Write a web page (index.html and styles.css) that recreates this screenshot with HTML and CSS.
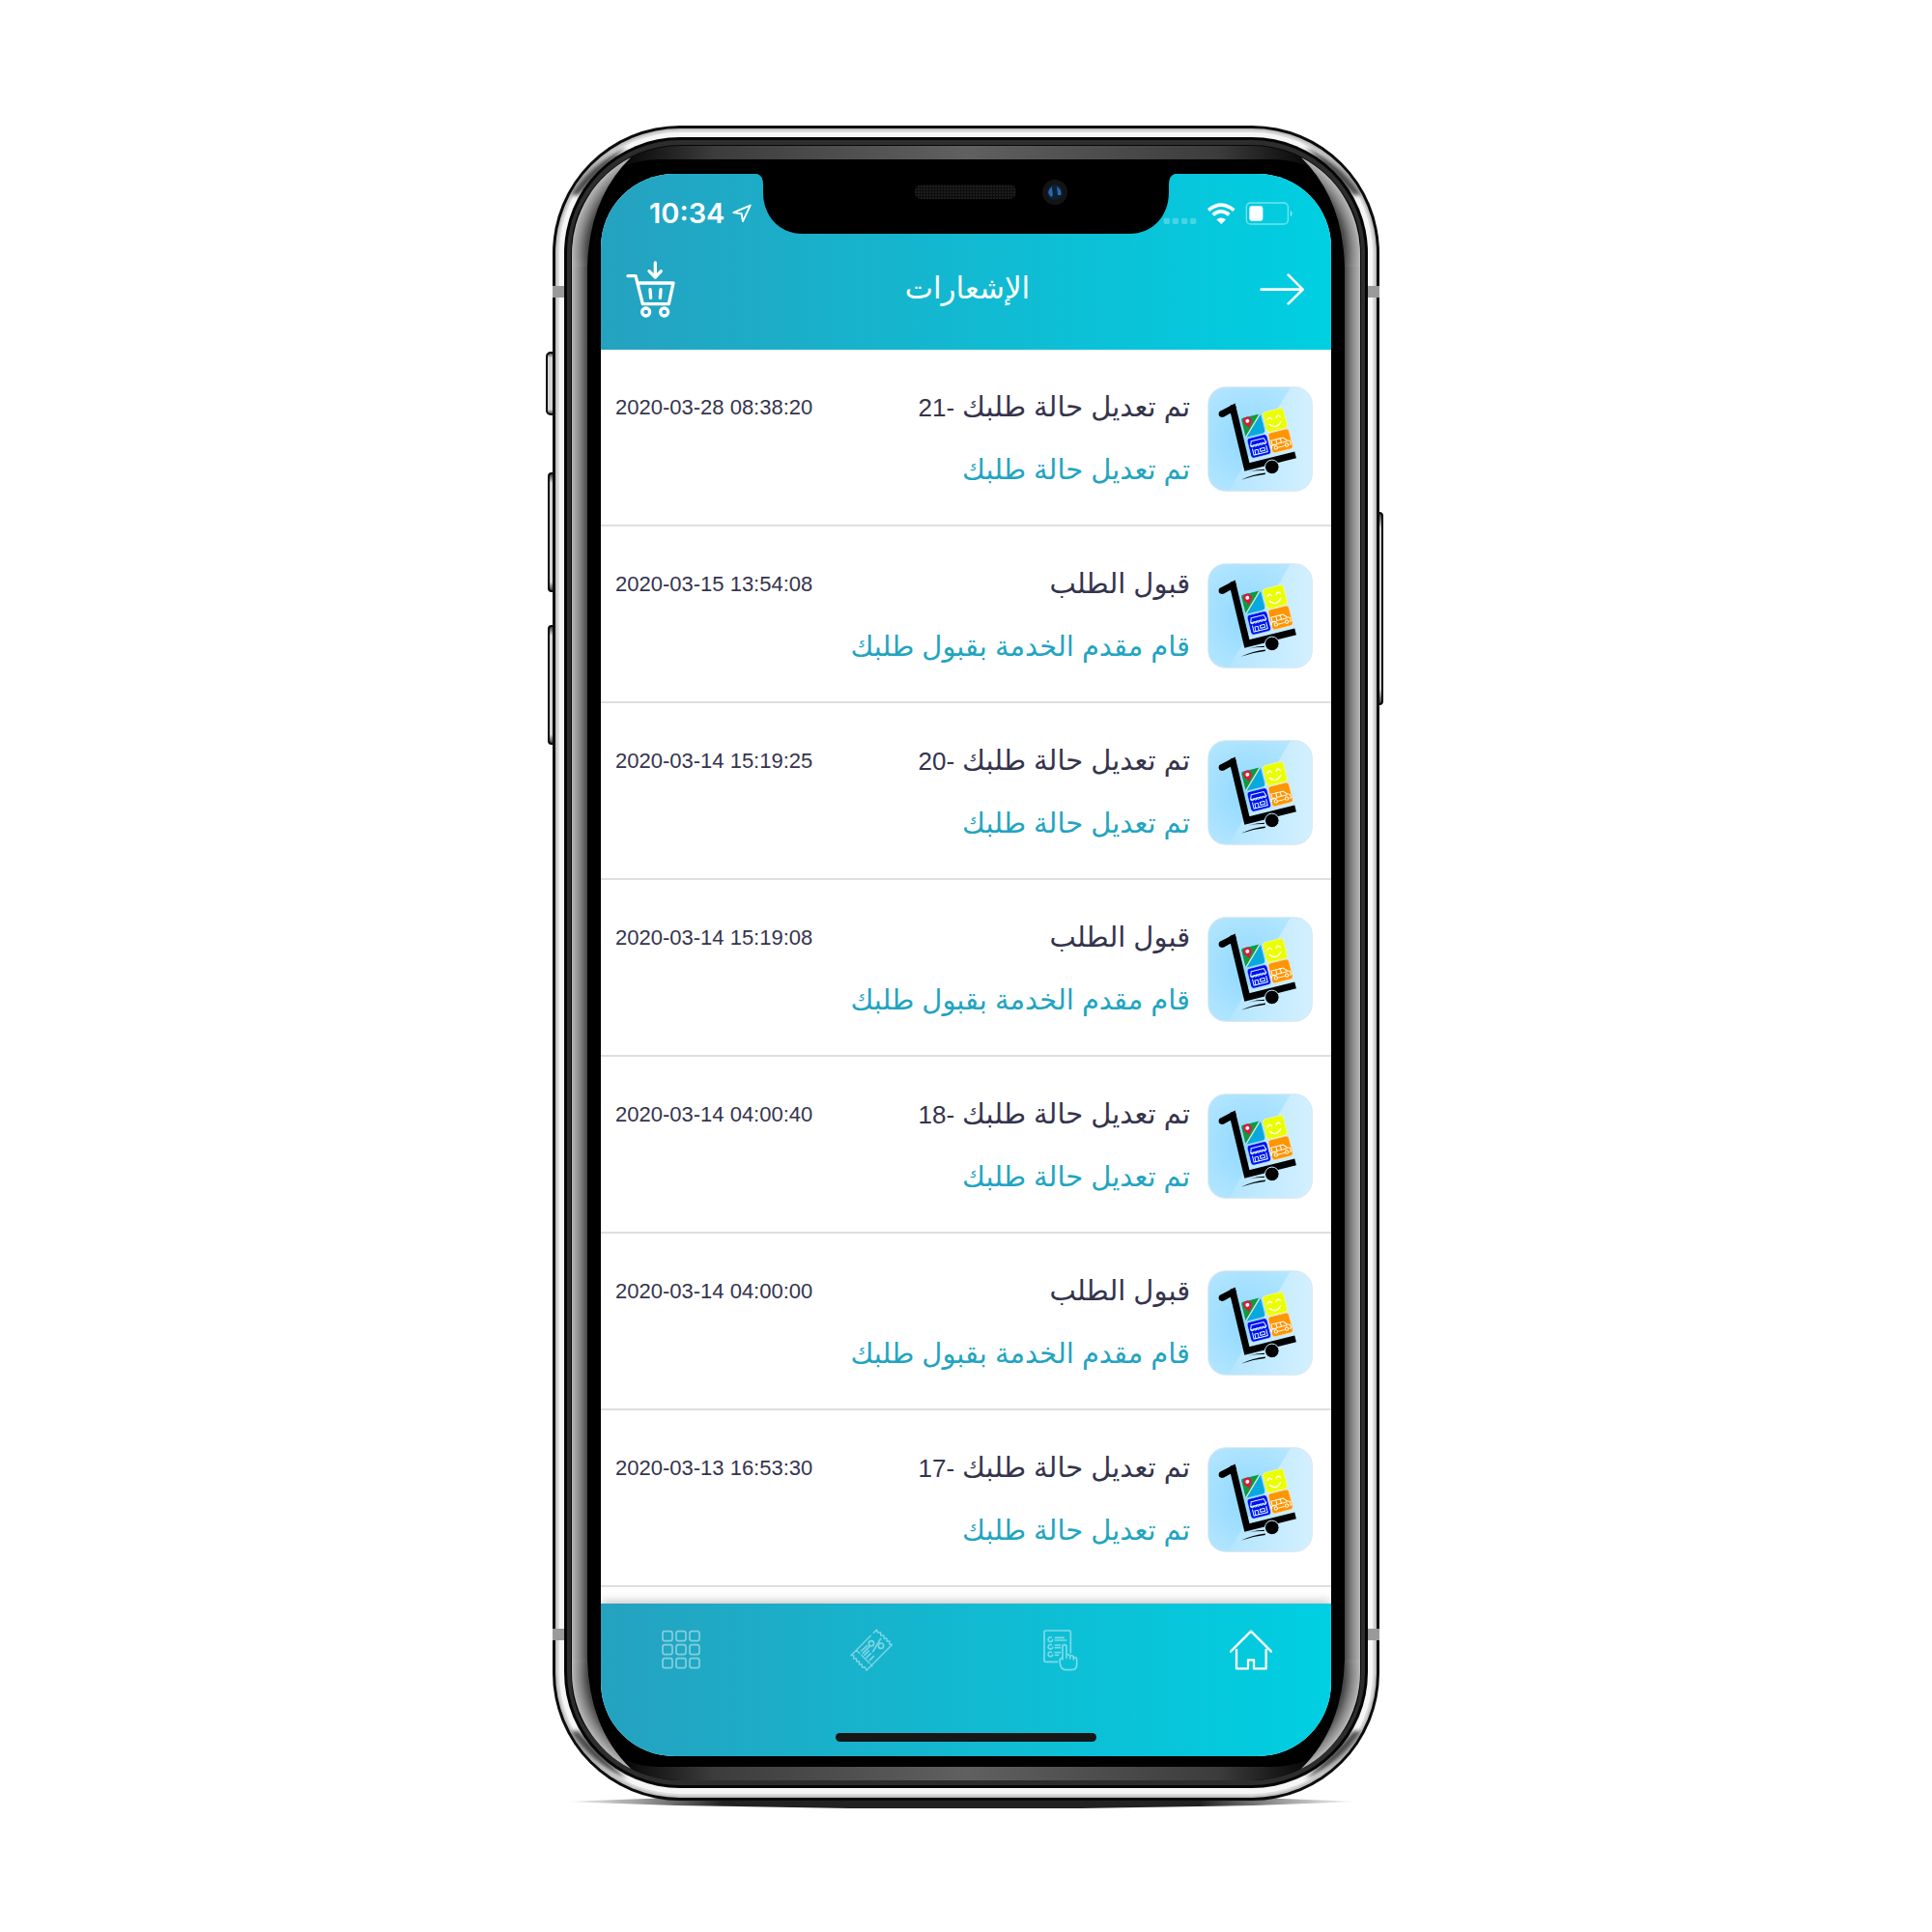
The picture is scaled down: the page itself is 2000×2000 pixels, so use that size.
FILE: index.html
```html
<!DOCTYPE html>
<html lang="ar" dir="rtl">
<head>
<meta charset="utf-8">
<meta name="viewport" content="width=device-width, initial-scale=1">
<title>الإشعارات</title>
<link rel="stylesheet" href="styles.css">
</head>
<body>
<svg width="0" height="0" class="defs" aria-hidden="true">
  <defs>
    <radialGradient id="sky" cx=".4" cy=".5" r=".6"><stop offset="0" stop-color="#8fd8ff"/><stop offset="1" stop-color="#b4e6ff"/></radialGradient>
    <linearGradient id="beam" x1="0" y1="0" x2="1" y2="0"><stop offset="0" stop-color="#b3e5ff"/><stop offset="1" stop-color="#d3f0ff"/></linearGradient>
    <clipPath id="tile"><rect x="96" y="89" width="324" height="324" rx="54"/></clipPath>
  </defs>
  <symbol id="app-logo" viewBox="94 87 328 328">
    <g clip-path="url(#tile)">
      <path fill="url(#sky)" d="M94 87h328v328H94z"/>
      <path fill="url(#beam)" d="M354 87h68v328H158z"/>
    </g>
    <rect x="96" y="89" width="324" height="324" rx="54" fill="none" stroke="#dfe6ee" stroke-width="3"/>
    <path d="M139 173 173 155 217 338 368 300" fill="none" stroke="#000" stroke-width="21"/>
    <circle cx="139" cy="173" r="10"/><circle cx="173" cy="154" r="10"/>
    <g transform="rotate(-14 200 187)">
      <rect x="199" y="187" width="62" height="60" rx="6" fill="#08a9df"/>
      <path d="M205 187h52l-58 58v-52q0-6 6-6z" fill="#109a3c"/>
      <path d="M258 188 200 246" stroke="#e8e8c8" stroke-width="4"/>
      <path d="M216 223c-2-10-13-14-13-24a13 13 0 0 1 26 0c0 10-11 14-13 24z" fill="#e3133f"/>
      <circle cx="216" cy="199" r="6" fill="#fff"/>
      <rect x="267" y="185" width="66" height="64" rx="10" fill="#eaff00" stroke="#fff6a0" stroke-width="2"/>
      <path d="M277 211q6-11 14 0M305 211q6-11 14 0M280 226q18 22 36 0" fill="none" stroke="#fff" stroke-width="4" stroke-linecap="round"/>
      <g transform="translate(1 -3)">
        <rect x="199" y="255" width="64" height="64" rx="10" fill="#0010f0" stroke="#bfe6ff" stroke-width="2"/>
        <path d="M211 266h40l5 14h-50zM206 280q5 9 10 0q5 9 10 0q5 9 10 0q5 9 10 0q5 9 10 0M209 290v20h44v-20M215 310v-14h10v14M232 295h14v9h-14z" fill="none" stroke="#dff" stroke-width="3"/>
        <rect x="267" y="255" width="66" height="64" rx="10" fill="#ff9500" stroke="#ffe2b0" stroke-width="2"/>
        <path d="M268 303v-8h18l-14-2v-14h38l10 11 9 4v11h-6M310 305h-22M287 279v14h33M301 279v14" fill="none" stroke="#fff" stroke-width="3"/>
        <circle cx="281" cy="304" r="5" fill="none" stroke="#fff" stroke-width="3"/><circle cx="316" cy="304" r="5" fill="none" stroke="#fff" stroke-width="3"/>
      </g>
    </g>
    <circle cx="295" cy="338" r="22" stroke="#cdeeff" stroke-width="3"/>
    <path d="M198 378q38-18 76-22v5q-38 4-76 17zM222 353q25-8 49-8v4q-24-1-49 4z"/>
  </symbol>
</svg>

<main class="phone">
  <svg class="phone-frame" viewBox="573 130 856 1734" preserveAspectRatio="none" aria-hidden="true">
    <defs>
      <linearGradient id="edgeL" gradientUnits="userSpaceOnUse" x1="593" x2="609" y1="0" y2="0"><stop offset="0" stop-color="#b8b8b8"/><stop offset=".5" stop-color="#888"/><stop offset="1" stop-color="#484848"/></linearGradient>
      <linearGradient id="edgeR" gradientUnits="userSpaceOnUse" x1="1409" x2="1393" y1="0" y2="0"><stop offset="0" stop-color="#b8b8b8"/><stop offset=".5" stop-color="#888"/><stop offset="1" stop-color="#484848"/></linearGradient>
      <radialGradient id="bend" gradientUnits="userSpaceOnUse" cx="705" cy="263" r="112"><stop offset=".857" stop-color="#484848"/><stop offset=".93" stop-color="#888"/><stop offset="1" stop-color="#b8b8b8"/></radialGradient>
      <linearGradient id="edgeTop" x1="0" x2="1" y1="0" y2="0"><stop offset=".05" stop-color="#000"/><stop offset=".18" stop-color="#3c3c3c"/><stop offset=".5" stop-color="#606060"/><stop offset=".82" stop-color="#3c3c3c"/><stop offset=".95" stop-color="#000"/></linearGradient>
      <linearGradient id="ground" x1="0" x2="1" y1="0" y2="0"><stop offset="0" stop-color="#fff"/><stop offset=".1" stop-color="#999"/><stop offset=".2" stop-color="#222"/><stop offset=".8" stop-color="#222"/><stop offset=".9" stop-color="#999"/><stop offset="1" stop-color="#fff"/></linearGradient>
      <linearGradient id="key" x1="0" x2="0" y1="0" y2="1"><stop offset="0" stop-color="#333"/><stop offset=".08" stop-color="#d4d4d4"/><stop offset=".92" stop-color="#d4d4d4"/><stop offset="1" stop-color="#333"/></linearGradient>
      <filter id="soft" x="-30%" y="-30%" width="160%" height="160%"><feGaussianBlur stdDeviation="2"/></filter>
      <clipPath id="body"><rect x="576" y="133" width="850" height="1728" rx="129"/></clipPath>
      <path id="corner" d="M593 276V263A112 112 0 0 1 654 163Q611 205 609 276z" fill="url(#bend)"/>
    </defs>
    <path d="M584 1865 700 1861H1300L1408 1865 1300 1869 1120 1872H880L700 1869z" fill="url(#ground)"/>
    <g fill="url(#key)" stroke="#0a0a0a" stroke-width="2">
      <rect x="567" y="365" width="10" height="64" rx="4"/>
      <rect x="569" y="490" width="8" height="122" rx="3"/>
      <rect x="569" y="648" width="8" height="122" rx="3"/>
      <rect x="1425" y="531" width="7" height="198" rx="3"/>
    </g>
    <rect x="573" y="130" width="856" height="1734" rx="132" fill="#0c0c0c"/>
    <rect x="576" y="133" width="850" height="1728" rx="129" fill="#c2c2c2"/>
    <rect x="578" y="135" width="846" height="1724" rx="127" fill="#dcdcdc"/>
    <rect x="580" y="137" width="842" height="1720" rx="125" fill="#f6f6f6"/>
    <g fill="#4a4a4a" clip-path="url(#body)" filter="url(#soft)">
      <path d="M592 202q18-32 58-50-26 24-50 50zM1410 202q-18-32-58-50 26 24 50 50z"/>
      <path d="M592 1792q18 32 58 50-26-24-50-50zM1410 1792q-18 32-58 50 26-24 50-50z"/>
    </g>
    <g fill="#9a9a9a"><path d="M573 296h12v12h-12zM1417 296h12v12h-12zM573 1686h12v12h-12zM1417 1686h12v12h-12z"/></g>
    <rect x="585" y="142" width="832" height="1709" rx="120" fill="#050505"/>
    <rect x="588" y="145" width="826" height="1703" rx="117" fill="#2d2d2d"/>
    <rect x="592" y="150" width="818" height="1693" rx="113" fill="#080808"/>
    <rect x="593" y="151" width="816" height="1692" rx="112" fill="url(#edgeTop)"/>
    <rect x="593" y="165" width="816" height="1664" rx="90" fill="#000"/>
    <path d="M593 275h16v1444h-16z" fill="url(#edgeL)"/>
    <path d="M1393 275h16v1444h-16z" fill="url(#edgeR)"/>
    <use href="#corner"/>
    <use href="#corner" transform="translate(2002 0) scale(-1 1)"/>
    <use href="#corner" transform="translate(0 1994) scale(1 -1)"/>
    <use href="#corner" transform="translate(2002 1994) scale(-1 -1)"/>
  </svg>

  <div class="screen">
    <header class="top">
      <div class="status" dir="ltr">
        <span class="clock">10:34</span>
        <svg class="locate" viewBox="630 303 62 60" aria-hidden="true"><path d="M634 330 688 307 664 358 660 334z" fill="none" stroke="#fff" stroke-width="6" stroke-linejoin="round"/></svg>
        <svg class="signals" viewBox="616 296 402 72" aria-hidden="true">
          <g fill="#fff" opacity=".25"><rect x="618" y="346" width="19" height="19" rx="5"/><rect x="645" y="346" width="19" height="19" rx="5"/><rect x="673" y="346" width="19" height="19" rx="5"/><rect x="700" y="346" width="19" height="19" rx="5"/></g>
          <path d="M757 322q40-33 79 0M771 336q25-21 50 0" fill="none" stroke="#fff" stroke-width="11"/>
          <path d="M782 351q14-11 29 0l-14 14z" fill="#fff"/>
          <rect x="875" y="299" width="129" height="66" rx="13" fill="none" stroke="#fff" stroke-opacity=".45" stroke-width="4"/>
          <rect x="884" y="309" width="42" height="46" rx="7" fill="#fff"/>
          <path d="M1011 322q6 3 6 10t-6 10z" fill="#fff" opacity=".5"/>
        </svg>
      </div>
      <div class="toolbar">
        <button class="icon-button" type="button" aria-label="رجوع">
          <svg class="arrow" viewBox="915 518 138 99"><path d="M920 568h128M1004 523l45 45-45 44" fill="none" stroke="#fff" stroke-width="8" stroke-linecap="round" stroke-linejoin="round"/></svg>
        </button>
        <h1>الإشعارات</h1>
        <button class="icon-button" type="button" aria-label="السلة">
          <svg class="cart" viewBox="296 481 153 177"><g fill="none" stroke="#fff" stroke-width="10" stroke-linecap="round" stroke-linejoin="round"><path d="M302 528h24l22 87h81l14-65H334M371 570l2 26M404 570l-2 26M387 487v42M368 513l19 19 18-19"/><circle cx="358" cy="640" r="12"/><circle cx="415" cy="640" r="12"/></g></svg>
        </button>
      </div>
    </header>

    <ul class="list">
      <li class="item"><svg class="logo" aria-hidden="true"><use href="#app-logo"/></svg><div class="text"><h2>تم تعديل حالة طلبك <span class="num">-21</span></h2><p>تم تعديل حالة طلبك</p></div><time dir="ltr">2020-03-28 08:38:20</time></li>
      <li class="item"><svg class="logo" aria-hidden="true"><use href="#app-logo"/></svg><div class="text"><h2>قبول الطلب</h2><p>قام مقدم الخدمة بقبول طلبك</p></div><time dir="ltr">2020-03-15 13:54:08</time></li>
      <li class="item"><svg class="logo" aria-hidden="true"><use href="#app-logo"/></svg><div class="text"><h2>تم تعديل حالة طلبك <span class="num">-20</span></h2><p>تم تعديل حالة طلبك</p></div><time dir="ltr">2020-03-14 15:19:25</time></li>
      <li class="item"><svg class="logo" aria-hidden="true"><use href="#app-logo"/></svg><div class="text"><h2>قبول الطلب</h2><p>قام مقدم الخدمة بقبول طلبك</p></div><time dir="ltr">2020-03-14 15:19:08</time></li>
      <li class="item"><svg class="logo" aria-hidden="true"><use href="#app-logo"/></svg><div class="text"><h2>تم تعديل حالة طلبك <span class="num">-18</span></h2><p>تم تعديل حالة طلبك</p></div><time dir="ltr">2020-03-14 04:00:40</time></li>
      <li class="item"><svg class="logo" aria-hidden="true"><use href="#app-logo"/></svg><div class="text"><h2>قبول الطلب</h2><p>قام مقدم الخدمة بقبول طلبك</p></div><time dir="ltr">2020-03-14 04:00:00</time></li>
      <li class="item"><svg class="logo" aria-hidden="true"><use href="#app-logo"/></svg><div class="text"><h2>تم تعديل حالة طلبك <span class="num">-17</span></h2><p>تم تعديل حالة طلبك</p></div><time dir="ltr">2020-03-13 16:53:30</time></li>
    </ul>

    <nav class="tabs">
      <div class="tab-row">
        <a class="tab active" href="#home" aria-label="الرئيسية"><svg viewBox="821 200 132 132"><path d="M824 271l63-63 63 63M842 266v58h36v-27h18v27h38v-58" fill="none" stroke="#fff" stroke-width="7" stroke-linecap="round" stroke-linejoin="round"/></svg></a>
        <a class="tab" href="#orders" aria-label="الطلبات"><svg viewBox="234 200 132 132"><g fill="none" stroke="#fff" stroke-width="5" stroke-linecap="round" stroke-linejoin="round"><path d="M290 303h-36q-5 0-5-5v-87q0-5 5-5h72q5 0 5 5v64"/><path d="M271 227a7 7 0 1 0 4 8M271 250a7 7 0 1 0 4 8M271 273a7 7 0 1 0 4 8M283 228h27M283 236h35M283 251h16M283 259h16M283 274h16M283 282h10"/><path d="M306 296v-39q0-7 6-7t6 7v25q6-6 11 3q7-5 11 4q10-2 10 8v14q0 17-16 17h-17q-13 0-18-14l-2-14q0-8 9-11M318 282v9M329 285v8M340 289v7"/></g></svg></a>
        <a class="tab" href="#offers" aria-label="العروض"><svg viewBox="962 199 132 132"><g fill="none" stroke="#fff" stroke-width="4" stroke-linejoin="round" stroke-linecap="round"><path d="M1026 221l-61 61 9 1-1 9 9 0 0 9 9 0-1 9 9 0 0 9 10 0 4 10 80-81-9-1 1-9-9 0 0-9-9 0 0-9-10 0 0-9-9 0-3-9-10 10M982 266l10 10 M997 281l25 25M1026 310l5 5"/><path d="M997 268l18-16M1002 275l20-20M1007 281l13-13M1013 289l13-13M1023 297l12-12M1033 270l24-40" stroke-width="5"/><circle cx="1028" cy="245" r="8" stroke-width="5"/><circle cx="1058" cy="252" r="8" stroke-width="5"/></g></svg></a>
        <a class="tab" href="#more" aria-label="المزيد"><svg viewBox="371 198 132 132"><g fill="none" stroke="#fff" stroke-width="5"><rect x="380" y="206" width="30" height="30" rx="7"/><rect x="422" y="206" width="30" height="30" rx="7"/><rect x="464" y="206" width="30" height="30" rx="7"/><rect x="380" y="248" width="30" height="30" rx="7"/><rect x="422" y="248" width="30" height="30" rx="7"/><rect x="464" y="248" width="30" height="30" rx="7"/><rect x="380" y="290" width="30" height="30" rx="7"/><rect x="422" y="290" width="30" height="30" rx="7"/><rect x="464" y="290" width="30" height="30" rx="7"/></g></svg></a>
      </div>
      <div class="home-bar"></div>
    </nav>

    <svg class="notch" viewBox="785 180 432 62" aria-hidden="true">
      <defs><pattern id="mesh" width="3" height="3" patternUnits="userSpaceOnUse"><path d="M0 0h3v3H0z" fill="#0c0c0c"/><circle cx="1" cy="1" r="1" fill="#242424"/></pattern></defs>
      <path d="M785 180q6 2 6 11v8c0 24 16 43 41 43h338c25 0 41-19 41-43v-8q0-9 6-11z"/>
      <rect x="948" y="191" width="105" height="15" rx="7" fill="url(#mesh)"/>
      <circle cx="1093" cy="199" r="13" fill="#141414"/><circle cx="1093" cy="199" r="8" fill="#0c2038"/>
      <path d="M1090 193q-7 6-1 11l2-2-1-7zM1095 193q6 4 4 9h-3z" fill="#2d68a8"/>
    </svg>
  </div>
</main>
</body>
</html>
```
FILE: styles.css
```css
* { box-sizing: border-box; }

body {
  margin: 0;
  padding: 130px 0;
  background: #fff;
  font-family: "Liberation Sans", "DejaVu Sans", sans-serif;
  color: #35344d;
}

.defs { position: absolute; }

h1, h2, p, ul { margin: 0; padding: 0; font-weight: 400; }

.phone {
  position: relative;
  width: 100%;
  max-width: 856px;
  margin: 0 auto;
  padding: 50px 50px 46px;
}

.phone-frame {
  position: absolute;
  inset: 0;
  width: 100%;
  height: 100%;
  overflow: visible;
}

.screen {
  position: relative;
  display: flex;
  flex-direction: column;
  overflow: hidden;
  border-radius: 76px;
  background: #fff;
}

.top, .tabs { background: linear-gradient(90deg, #25a2c0, #12b9d1 50%, #00cfe2); }

.status {
  display: flex;
  align-items: center;
  height: 82px;
  padding: 0 40px 0 50px;
  color: #fff;
}

.clock { font: 600 29px/32px Inter, sans-serif; }
.locate { width: 20px; height: 20px; margin-left: 8px; }
.signals { width: 134px; height: 24px; margin-left: auto; }

.toolbar {
  display: flex;
  align-items: center;
  justify-content: space-between;
  height: 100px;
  padding: 0 28px 26px 26px;
  color: #fff;
}

.toolbar h1 { font-size: 31px; line-height: 60px; }

.icon-button {
  display: flex;
  padding: 0;
  border: 0;
  background: none;
  cursor: pointer;
}

.arrow { width: 46px; height: 33px; }
.cart { width: 51px; height: 59px; }

.list { padding-bottom: 17px; list-style: none; }

.item {
  display: flex;
  align-items: center;
  gap: 18px;
  padding: 27px 19px 24px 15px;
  border-bottom: 2px solid #dedede;
}

.logo { flex: none; width: 109px; height: 109px; }

.text { flex: 1; font-size: 29px; line-height: 65px; white-space: nowrap; }
.text h2 { font-size: inherit; }
.text p { color: #22a4c1; }
.num { font-size: 26px; line-height: 1; }

.item time { align-self: flex-start; font-size: 22px; line-height: 65px; }

.tabs {
  position: relative;
  padding-top: 26px;
  box-shadow: 0 -2px 10px rgba(0, 0, 0, .25);
}

.tab-row { display: flex; justify-content: space-between; padding: 0 61px; }
.tab { display: flex; opacity: .45; }
.tab.active { opacity: 1; }
.tab svg { width: 44px; height: 44px; }

.home-bar {
  width: 270px;
  height: 9px;
  margin: 64px auto 15px;
  border-radius: 5px;
  background: #161616;
}

.notch {
  position: absolute;
  top: 0;
  left: 50%;
  width: 432px;
  height: 62px;
  margin-left: -216px;
}
```
